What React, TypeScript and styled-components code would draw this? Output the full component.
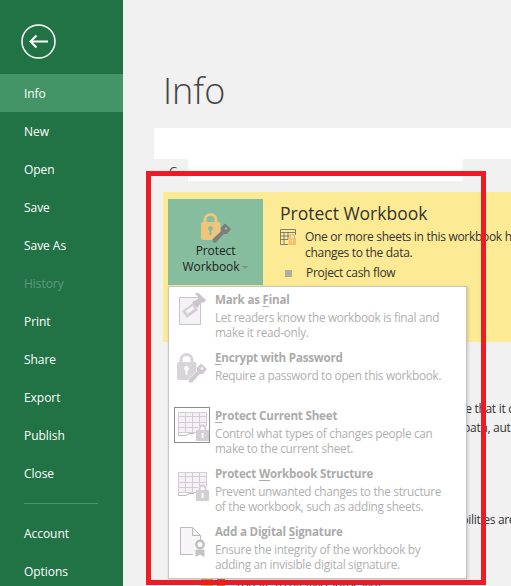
import React from "react";
import styled, { createGlobalStyle } from "styled-components";

const Global = createGlobalStyle`
  html, body { margin: 0; padding: 0; height: 100%; overflow: hidden; background: #f1f1f1; }
  #root { height: 100%; }
  * { box-sizing: border-box; }
`;

const Window = styled.div`
  display: flex;
  position: relative;
  width: 511px;
  height: 586px;
  overflow: hidden;
  font-family: "Open Sans", "Noto Sans", sans-serif;
  font-size: 12px;
  color: #333;
`;

const Sidebar = styled.nav`
  flex: 0 0 123px;
  display: flex;
  flex-direction: column;
  background: #217346;
  color: #fff;
  padding-top: 24px;
  overflow: hidden;
`;

const BackButton = styled.div`
  flex: 0 0 50px;
  padding-left: 21px;
`;

const NavItem = styled.div<{ $active?: boolean; $disabled?: boolean }>`
  flex: 0 0 38px;
  display: flex;
  align-items: center;
  padding-left: 24px;
  font-size: 12px;
  letter-spacing: -0.05px;
  background: ${(p) => (p.$active ? "#439467" : "transparent")};
  color: ${(p) => (p.$disabled ? "#5f9b7c" : "#fff")};
`;

const NavRule = styled.div`
  flex: 0 0 1px;
  margin: 11px 25px 10px 24px;
  background: #4d9470;
`;

const Main = styled.main`
  flex: 1;
  min-width: 0;
  display: flex;
  flex-direction: column;
  overflow: hidden;
  padding-left: 31px;
`;

const Title = styled.h1`
  flex: 0 0 128px;
  margin: 0;
  padding: 66px 0 0 9px;
  font-family: "Open Sans", sans-serif;
  font-weight: 300;
  font-size: 36px;
  line-height: 50px;
  color: #444;
`;

const WhiteBar = styled.div`
  flex: 0 0 31px;
  background: #fff;
`;

const SubRow = styled.div`
  flex: 0 0 33px;
  display: flex;
`;

const SubLabel = styled.div`
  width: 34px;
  padding: 3px 0 0 15px;
  font-size: 13px;
  color: #444;
`;

const SubWhite = styled.div`
  width: 275px;
  height: 22px;
  background: #fff;
`;

const Banner = styled.section`
  flex: 0 0 150px;
  display: flex;
  margin-left: 9px;
  padding: 7px 0 0 5px;
  background: #fdea94;
`;

const ProtectButton = styled.div`
  flex: 0 0 95px;
  height: 86px;
  display: flex;
  flex-direction: column;
  align-items: center;
  padding-top: 13px;
  background: #86bd9f;
  line-height: 16px;
  font-size: 12px;
  letter-spacing: -0.1px;
  color: #222;
  text-align: center;
`;

const Caret = styled.span`
  display: inline-block;
  margin-left: 3px;
  vertical-align: 2px;
  border-left: 3px solid transparent;
  border-right: 3px solid transparent;
  border-top: 3px solid #7f8f86;
`;

const BannerBody = styled.div`
  padding-left: 17px;
  white-space: nowrap;
`;

const BannerTitle = styled.h2`
  margin: 0 0 2px;
  font-weight: 400;
  font-size: 17.5px;
  line-height: 28px;
  color: #333;
`;

const BannerLine = styled.div`
  display: flex;
  gap: 9px;
  align-items: flex-start;
  font-size: 12px;
  line-height: 16px;
  letter-spacing: -0.3px;
`;

const BulletLine = styled.div`
  display: flex;
  align-items: center;
  margin-top: 4px;
  font-size: 12px;
  line-height: 16px;
  letter-spacing: -0.3px;
  padding-left: 5px;
  gap: 14px;
`;

const Bullet = styled.span`
  width: 7px;
  height: 7px;
  background: #b0aca0;
`;

const Details = styled.section`
  padding-top: 58px;
  white-space: nowrap;
  font-size: 12px;
  letter-spacing: -0.3px;
  color: #333;
`;

const DetailLine = styled.div<{ $after?: number; $indent: number }>`
  height: 18px;
  margin-bottom: ${(p) => p.$after ?? 0}px;
  margin-left: ${(p) => p.$indent}px;
  line-height: 18px;
`;

const VersionRow = styled.div`
  display: flex;
  align-items: flex-start;
  gap: 6px;
  margin-left: 47px;
  color: #111;
`;

const Menu = styled.div`
  position: absolute;
  left: 168px;
  top: 286px;
  width: 299px;
  height: 293px;
  padding-top: 5px;
  display: grid;
  grid-auto-rows: 58px;
  overflow: hidden;
  background: #fff;
  border: 1px solid #c6c6c6;
  box-shadow: 1px 1px 3px rgba(0, 0, 0, 0.18);
`;

const MenuItem = styled.div`
  display: flex;
`;

const MenuIcon = styled.div<{ $top: number }>`
  flex: 0 0 46px;
  display: flex;
  justify-content: center;
  align-items: flex-start;
  margin-top: ${(p) => p.$top}px;
`;

const MenuText = styled.div`
  line-height: 15px;
  color: #b0b0b0;
  font-size: 11.8px;
  letter-spacing: -0.3px;
  white-space: nowrap;
`;

const MenuTitle = styled.div`
  font-weight: 700;
  font-size: 11.6px;
  line-height: 15px;
  margin-bottom: 3px;
  letter-spacing: -0.2px;
  color: #ababab;
  u { text-underline-offset: 2px; }
`;

const Frame = styled.div`
  position: absolute;
  left: 146px;
  top: 171px;
  width: 340px;
  height: 414px;
  border: 5px solid #ed1c24;
  pointer-events: none;
`;

const BackIcon = () => (
  <svg width="35" height="35" viewBox="0 0 35 35" fill="none" stroke="#fff">
    <circle cx="17.5" cy="17.5" r="16.5" strokeWidth="1.5" />
    <path d="M9.5 17.5H27M15.5 11.5L9.5 17.5L15.5 23.5" strokeWidth="2" />
  </svg>
);

const LockKey = ({ lock, hole, keyFill }: { lock: string; hole: string; keyFill: string }) => (
  <svg width="30" height="31" viewBox="0 0 30 31">
    <path d="M4 11V8a5.5 5.5 0 0 1 11 0v3" fill="none" stroke={lock} strokeWidth="3" />
    <rect x="0" y="10" width="19.5" height="18" rx="2" fill={lock} />
    <circle cx="9.5" cy="16.5" r="2.4" fill={hole} />
    <rect x="8.6" y="17" width="1.8" height="6" fill={hole} />
    <g stroke={hole} strokeWidth="1" paintOrder="stroke">
      <path d="M20 15.5L24 11.5L30 17L26 22L22.8 22L15 30.5H12L11.5 27.5L20 19.5Z" fill={keyFill} />
    </g>
    <circle cx="25" cy="16.5" r="1.2" fill={hole} />
  </svg>
);

const SheetIcon = ({ framed }: { framed?: boolean }) => (
  <svg width="36" height="36" viewBox="0 0 36 36" fill="none">
    {framed && <rect x="0.5" y="0.5" width="35" height="35" stroke="#8c8c8c" />}
    <path d="M4 5H32V19H24V25H4Z" fill="#f4f0f5" />
    <path d="M4.5 5.5H32.5V19M4.5 5.5V25.5H22M4.5 9.5H32.5M4.5 15.5H32.5M4.5 20.5H24M11.5 5.5V25.5M18.5 5.5V25.5M25.5 5.5V19" stroke="#d2cdd2" />
    <path d="M4.5 25.5V28.5H12L15 26.5H20" stroke="#bdbabd" />
    <path d="M25.5 24v-2.5a3 3 0 0 1 6 0V24" stroke="#d3d0d3" strokeWidth="2" />
    <rect x="22" y="23" width="13" height="11" fill="#d3d0d3" />
    <rect x="27.7" y="26" width="1.8" height="5" fill="#fff" />
  </svg>
);

const FinalIcon = () => (
  <svg width="27" height="32" viewBox="0 0 27 32" fill="none">
    <rect x="0.5" y="4.5" width="21" height="27" fill="#f5f2f6" stroke="#c9c4cb" />
    <path d="M3 18L14 10L19 17L8 25Z" fill="#d3cfd5" />
    <path d="M6.5 18L13.5 13L15.5 16L8.5 21Z" fill="#f5f2f6" />
    <path d="M13 9L18 15L22 10L26 9L19 2L19 6Z" fill="#c9c6c9" />
    <path d="M17 0L26 8" stroke="#c9c6c9" strokeWidth="3" />
  </svg>
);

const SignatureIcon = () => (
  <svg width="25" height="30" viewBox="0 0 25 30" fill="none">
    <path d="M0.5 0.5H12.5L20.5 8.5V14M0.5 0.5V27.5H13" fill="none" stroke="#bdbabd" />
    <path d="M1 1H12.5L20 9V13H15V27H1Z" fill="#f7f5f8" />
    <path d="M12.5 0.5V8.5H20.5" stroke="#bdbabd" />
    <circle cx="20" cy="17.5" r="3.7" stroke="#bdbdbd" strokeWidth="2.4" fill="#fff" />
    <path d="M15.5 22.5H24.5V30L20 27.5L15.5 30Z" fill="#c4c4c4" />
  </svg>
);

const SmallSheetSvg = styled.svg`
  flex: 0 0 16px;
`;

const SmallSheet = () => (
  <SmallSheetSvg width="16" height="16" viewBox="0 0 16 16" fill="none">
    <path d="M0.5 0.5H15.5V6M0.5 0.5V15.5H8M0.5 3.5H15.5M0.5 7H9M0.5 10.5H8M4 3.5V15M8 3.5V10" stroke="#666" strokeWidth="0.8" />
    <path d="M10 9V7.5a2.2 2.2 0 0 1 4.4 0V9" stroke="#e4ba6e" strokeWidth="1.2" />
    <rect x="8.5" y="9" width="7.5" height="7" fill="#eec374" />
    <rect x="11.7" y="10.5" width="1.2" height="3" fill="#fdea94" />
  </SmallSheetSvg>
);

const VersionIcon = () => (
  <svg width="28" height="10" viewBox="0 0 28 10">
    <rect x="0" y="0" width="12" height="10" fill="#e8a33d" />
    <rect x="16" y="0" width="8" height="10" fill="#d06a3a" />
  </svg>
);

const GREY = { lock: "#d8d5d8", hole: "#fff", keyFill: "#cfccd0" };

const items = [
  { top: 1, icon: <FinalIcon />, title: <>Mark as <u>F</u>inal</>, lines: ["Let readers know the workbook is final and", "make it read-only."] },
  { top: 2, icon: <LockKey {...GREY} />, title: <><u>E</u>ncrypt with Password</>, lines: ["Require a password to open this workbook."] },
  { top: -1, icon: <SheetIcon framed />, title: <><u>P</u>rotect Current Sheet</>, lines: ["Control what types of changes people can", "make to the current sheet."] },
  { top: 1, icon: <SheetIcon />, title: <>Protect <u>W</u>orkbook Structure</>, lines: ["Prevent unwanted changes to the structure", "of the workbook, such as adding sheets."] },
  { top: 3, icon: <SignatureIcon />, title: <>Add a Digital <u>S</u>ignature</>, lines: ["Ensure the integrity of the workbook by", "adding an invisible digital signature."] },
];

const nav = ["New", "Open", "Save", "Save As"];
const nav2 = ["Print", "Share", "Export", "Publish", "Close"];

export default function App() {
  return (
    <Window>
      <Global />
      <Sidebar>
        <BackButton><BackIcon /></BackButton>
        <NavItem $active>Info</NavItem>
        {nav.map((n) => <NavItem key={n}>{n}</NavItem>)}
        <NavItem $disabled>History</NavItem>
        {nav2.map((n) => <NavItem key={n}>{n}</NavItem>)}
        <NavRule />
        <NavItem>Account</NavItem>
        <NavItem>Options</NavItem>
      </Sidebar>
      <Main>
        <Title>Info</Title>
        <WhiteBar />
        <SubRow>
          <SubLabel>C</SubLabel>
          <SubWhite />
        </SubRow>
        <Banner>
          <ProtectButton>
            <LockKey lock="#eec57a" hole="#86bd9f" keyFill="#7d7d7d" />
            <span>Protect</span>
            <span>Workbook<Caret /></span>
          </ProtectButton>
          <BannerBody>
            <BannerTitle>Protect Workbook</BannerTitle>
            <BannerLine>
              <SmallSheet />
              <span>One or more sheets in this workbook have been locked to prevent unwanted<br />changes to the data.</span>
            </BannerLine>
            <BulletLine><Bullet />Project cash flow</BulletLine>
          </BannerBody>
        </Banner>
        <Details>
          <DetailLine $indent={129} $after={1}>Before publishing this file, be aware that it contains:</DetailLine>
          <DetailLine $indent={150} $after={74}>Document properties, printer path, author's name</DetailLine>
          <DetailLine $indent={151} $after={48}>Content that people with disabilities are unable to read</DetailLine>
          <VersionRow><VersionIcon />Today, 10:04 AM (autosave)</VersionRow>
        </Details>
      </Main>
      <Menu>
        {items.map((it, i) => (
          <MenuItem key={i}>
            <MenuIcon $top={it.top}>{it.icon}</MenuIcon>
            <MenuText>
              <MenuTitle>{it.title}</MenuTitle>
              {it.lines.map((l) => <div key={l}>{l}</div>)}
            </MenuText>
          </MenuItem>
        ))}
      </Menu>
      <Frame />
    </Window>
  );
}
